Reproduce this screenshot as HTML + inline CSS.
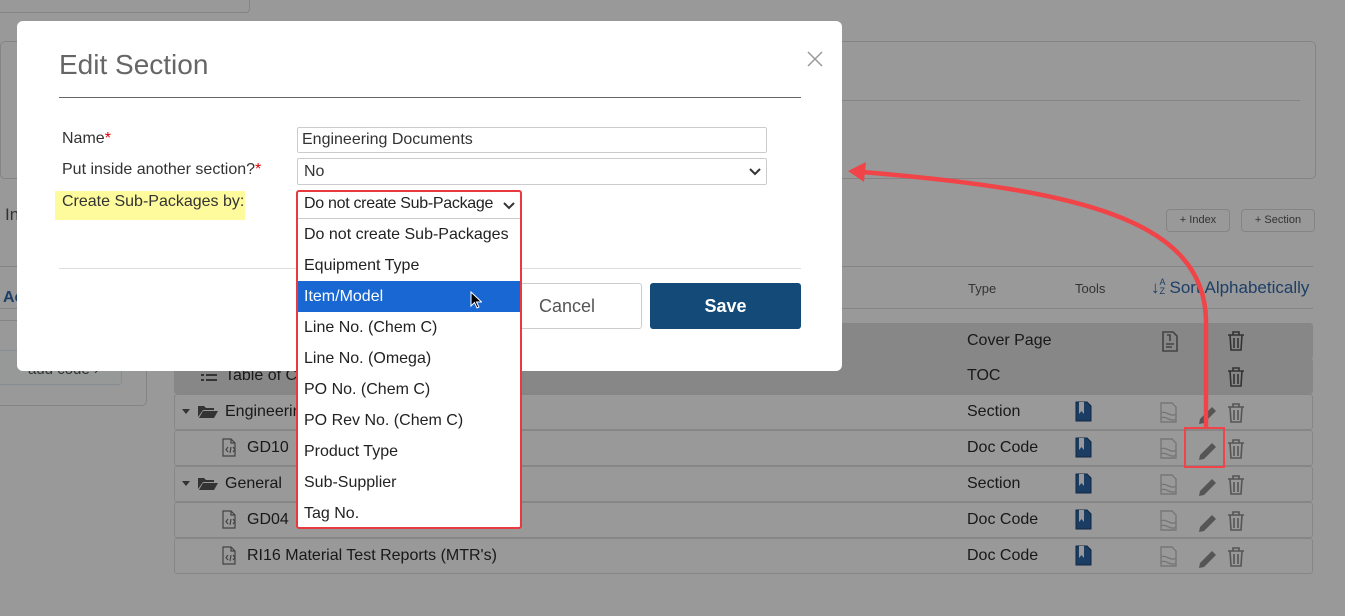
<!DOCTYPE html>
<html><head><meta charset="utf-8"><style>
*{box-sizing:border-box;margin:0;padding:0}
html,body{background:#fff}
body{width:1345px;height:616px;overflow:hidden;font-family:"Liberation Sans",sans-serif;position:relative;color:#333}
.a{position:absolute}
.row{position:absolute;left:174px;width:1139px;height:36px;border:1px solid #e0e0e0;border-radius:3px;font-size:16px;color:#2b2b2b;background:#fff}
.row span{position:absolute;top:8px}
.dark{background:#e1e1e1}
.opt{height:31px;line-height:31px;padding-left:6px;font-size:16px;color:#222}
</style></head><body>
<!-- page background (un-dimmed colours) -->
<div class="a" style="left:-5px;top:-5px;width:255px;height:18px;border:1px solid #ddd;border-radius:4px"></div>
<div class="a" style="left:0;top:41px;width:1316px;height:138px;border:1px solid #ddd;border-radius:5px"></div>
<div class="a" style="left:842px;top:100px;width:458px;height:1px;background:#ddd"></div>
<div class="a" style="left:5px;top:205px;font-size:17px;color:#555">In</div>
<div class="a" style="left:1166px;top:209px;width:64px;height:23px;border:1px solid #ddd;border-radius:4px;font-size:11px;color:#555;text-align:center;line-height:21px">+ Index</div>
<div class="a" style="left:1241px;top:209px;width:74px;height:23px;border:1px solid #ddd;border-radius:4px;font-size:11px;color:#555;text-align:center;line-height:21px">+ Section</div>
<div class="a" style="left:0;top:266px;width:1313px;height:1px;background:#ddd"></div>
<div class="a" style="left:3px;top:289px;font-size:16px;font-weight:bold;color:#3269aa">Ac</div>
<div class="a" style="left:968px;top:281px;font-size:13px;color:#555">Type</div>
<div class="a" style="left:1075px;top:281px;font-size:13px;color:#555">Tools</div>
<div class="a" style="left:1151px;top:278px;font-size:17px;color:#3269aa;white-space:nowrap"><b>&#8595;</b><span style="font-size:9px;display:inline-block;line-height:9px;vertical-align:top;margin-right:4px">A<br>Z</span>Sort Alphabetically</div>
<div class="a" style="left:0;top:308px;width:1313px;height:1px;background:#ddd"></div>
<div class="a" style="left:-5px;top:320px;width:152px;height:86px;border:1px solid #ddd;border-radius:5px"></div>
<div class="a" style="left:-5px;top:350px;width:127px;height:35px;border:1px solid #e0ecf4;border-radius:3px;background:#fcffff;font-size:15px;color:#555;padding:10px 0 0 32px">add code ›</div>

<div class="row dark" style="top:323px"><span style="left:792px">Cover Page</span></div>
<div class="row dark" style="top:358px"><span style="left:50px">Table of C</span><span style="left:792px">TOC</span></div>
<div class="row" style="top:394px"><span style="left:50px">Engineerin</span><span style="left:792px">Section</span></div>
<div class="row" style="top:430px"><span style="left:72px">GD10</span><span style="left:792px">Doc Code</span></div>
<div class="row" style="top:466px"><span style="left:50px">General</span><span style="left:792px">Section</span></div>
<div class="row" style="top:502px"><span style="left:72px">GD04</span><span style="left:792px">Doc Code</span></div>
<div class="row" style="top:538px"><span style="left:72px">RI16 Material Test Reports (MTR's)</span><span style="left:792px">Doc Code</span></div>

<svg class="a" style="left:0;top:0" width="1345" height="616">
 <g fill="#555"><path d="M201 369h3v2h-3zM201 374h3v2h-3zM201 379h3v2h-3zM206 369h11v2h-11zM206 374h11v2h-11zM206 379h11v2h-11z"/></g>
 <path id="ar" d="M182 409h8l-4 5z" fill="#555"/><use href="#ar" y="72"/>
 <path id="fd" d="M198 417v-11h6l2 2h8v2h-11l-5 7zM199 418l4-7h15l-4 7z" fill="#555"/><use href="#fd" y="72"/>
 <g id="dc" fill="none" stroke="#717171" stroke-width="1.2"><path d="M223 439h8l4 4v13h-12zM231 439v4h4M228 447l-2 2.5 2 2.5M231 447l-1 6M233 447l2 2.5-2 2.5"/></g>
 <use href="#dc" y="72"/><use href="#dc" y="108"/>
 <g fill="none" stroke="#717171" stroke-width="1.6">
  <path d="M1163 332h10l4 4v15h-14z"/><path d="M1166 344h8M1166 347h6M1167 335h3v6"/>
 </g>
 <g id="tr" fill="none" stroke="#555" stroke-width="1.6">
  <path d="M1228 335h16M1233 335v-3h6v3M1230 335l1 15h10l1-15M1234 338v10M1238 338v10"/>
 </g>
 <use href="#tr" y="36"/>
 <g id="tr2" fill="none" stroke="#8e8e8e" stroke-width="1.6">
  <path d="M1228 407h16M1233 407v-3h6v3M1230 407l1 15h10l1-15M1234 410v10M1238 410v10"/>
 </g>
 <use href="#tr2" y="36"/><use href="#tr2" y="72"/><use href="#tr2" y="108"/><use href="#tr2" y="144"/>
 <g id="bk"><path d="M1076 402h11l4 4v15h-15z" fill="#2f66a5" stroke="#184070"/><path d="M1079 402v12l2.5-3 2.5 3v-12" fill="#fff"/></g>
 <use href="#bk" y="36"/><use href="#bk" y="72"/><use href="#bk" y="108"/><use href="#bk" y="144"/>
 <g id="pg" fill="none" stroke="#c6c6c6" stroke-width="1.4"><path d="M1161 403h11l4 4v15h-15z M1161 413c5-3 10 5 15 1M1161 418c5-3 10 5 15 1"/></g>
 <use href="#pg" y="36"/><use href="#pg" y="72"/><use href="#pg" y="108"/><use href="#pg" y="144"/>
 <g id="pn"><path d="M1200 419l12-12 4 4-12 12-5 1z" fill="#8e8e8e"/></g>
 <use href="#pn" y="36"/><use href="#pn" y="72"/><use href="#pn" y="108"/><use href="#pn" y="144"/>
</svg>

<!-- backdrop -->
<div class="a" style="left:0;top:0;width:1345px;height:616px;background:rgba(0,0,0,0.4)"></div>

<!-- modal -->
<div class="a" style="left:17px;top:21px;width:825px;height:350px;background:#fff;border-radius:6px"></div>
<div class="a" style="left:59px;top:49px;font-size:28px;color:#666">Edit Section</div>
<svg class="a" style="left:807px;top:51px" width="16" height="16"><path d="M1 1l14 14M15 1L1 15" stroke="#999" stroke-width="1.5"/></svg>
<div class="a" style="left:59px;top:97px;width:742px;height:1px;background:#666"></div>
<div class="a" style="left:62px;top:130px;font-size:16px;color:#333">Name<span style="color:#d00">*</span></div>
<div class="a" style="left:62px;top:161px;font-size:16px;color:#333">Put inside another section?<span style="color:#d00">*</span></div>
<div class="a" style="left:55px;top:191px;width:190px;height:29px;background:#fefb9c"></div>
<div class="a" style="left:62px;top:193px;font-size:16px;color:#333">Create Sub-Packages by:</div>
<div class="a" style="left:297px;top:127px;width:470px;height:26px;border:1px solid #ccc;border-radius:2px;font-size:16px;padding:3px 4px;color:#333">Engineering Documents</div>
<div class="a" style="left:297px;top:158px;width:470px;height:27px;border:1px solid #ccc;border-radius:2px;font-size:16px;padding:4px 6px;color:#333">No<svg style="position:absolute;right:5px;top:9px" width="12" height="8"><path d="M1 1l5 5 5-5" fill="none" stroke="#333" stroke-width="2"/></svg></div>
<div class="a" style="left:59px;top:268px;width:742px;height:1px;background:#ddd"></div>
<div class="a" style="left:500px;top:283px;width:142px;height:46px;border:1px solid #ccc;border-radius:3px;font-size:18px;color:#555;line-height:44px;padding-left:38px">Cancel</div>
<div class="a" style="left:650px;top:283px;width:151px;height:46px;background:#134a78;border-radius:3px;font-size:18px;color:#fff;font-weight:bold;text-align:center;line-height:46px">Save</div>

<!-- dropdown -->
<div class="a" style="left:296px;top:190px;width:226px;height:339px;border:2px solid #e8393f;border-radius:3px;background:#fff">
 <div style="height:27px;border-bottom:1px solid #ccc;font-size:16px;padding:3px 0 0 6px;color:#222;white-space:nowrap;overflow:hidden;letter-spacing:-0.3px">Do not create Sub-Package<svg style="position:absolute;right:5px;top:10px" width="12" height="8"><path d="M1 1l5 5 5-5" fill="none" stroke="#333" stroke-width="2"/></svg></div>
 <div class="opt">Do not create Sub-Packages</div>
 <div class="opt">Equipment Type</div>
 <div class="opt" style="background:#1967d2;color:#fff;position:relative">Item/Model<svg style="position:absolute;left:172px;top:10px" width="12" height="18"><path d="M1 1v14l3.5-3.5 2.5 5.5 2-1-2.5-5h5z" fill="#000" stroke="#fff" stroke-width="1"/></svg></div>
 <div class="opt">Line No. (Chem C)</div>
 <div class="opt">Line No. (Omega)</div>
 <div class="opt">PO No. (Chem C)</div>
 <div class="opt">PO Rev No. (Chem C)</div>
 <div class="opt">Product Type</div>
 <div class="opt">Sub-Supplier</div>
 <div class="opt">Tag No.</div>
</div>

<!-- arrow -->
<svg class="a" style="left:0;top:0" width="1345" height="616">
 <path d="M1206 428 L1206 320 C1204 220 1080 190 862 172" fill="none" stroke="#f04448" stroke-width="4.5"/>
 <path d="M848 171 L866 162 L864 182 z" fill="#f04448"/>
 <rect x="1185" y="428" width="39" height="39" fill="none" stroke="#f04448" stroke-width="2"/>
</svg>
</body></html>
